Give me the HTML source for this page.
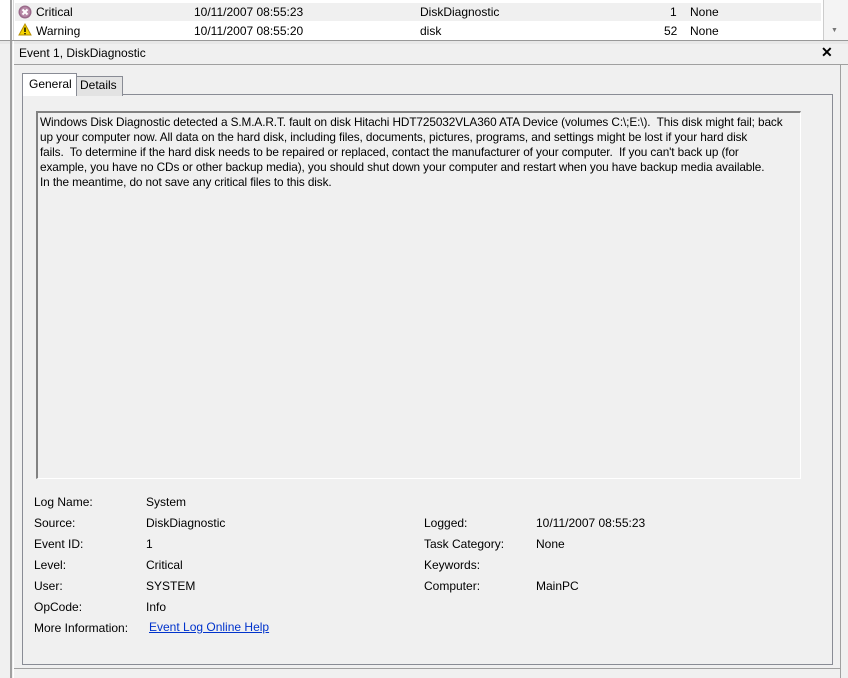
<!DOCTYPE html>
<html><head><style>
body{margin:0;width:848px;height:678px;background:#f0f0f0;font-family:"Liberation Sans",sans-serif;font-size:12px;color:#000;position:relative;overflow:hidden}
.a{position:absolute;white-space:nowrap}
</style></head><body>
<div class="a" style="left:0;top:0;width:848px;height:40px;background:#fff"></div>
<div class="a" style="left:15px;top:3px;width:806px;height:18px;background:#f0f0f0"></div>
<div class="a" style="left:10px;top:0;width:2px;height:40px;background:#a0a0a0"></div>
<div class="a" style="left:13px;top:0;width:1px;height:40px;background:#d8d8d8"></div>
<div class="a" style="left:823px;top:0;width:1px;height:40px;background:#ccc"></div>
<div class="a" style="left:824px;top:0;width:24px;height:40px;background:#f4f4f4"></div>
<div class="a" style="left:831px;top:27px;font-size:7px;color:#777">▼</div>
<svg class="a" style="left:18px;top:5px" width="14" height="14"><circle cx="7" cy="7" r="6.5" fill="#9a6a8a"/><circle cx="7" cy="7" r="5" fill="#b88aa8"/><path d="M4.5 4.5L9.5 9.5M9.5 4.5L4.5 9.5" stroke="#fff" stroke-width="2"/></svg>
<div class="a" style="left:36px;top:5px">Critical</div>
<div class="a" style="left:194px;top:5px">10/11/2007 08:55:23</div>
<div class="a" style="left:420px;top:5px">DiskDiagnostic</div>
<div class="a" style="left:670px;top:5px">1</div>
<div class="a" style="left:690px;top:5px">None</div>
<svg class="a" style="left:18px;top:23px" width="14" height="13"><path d="M7 1L13 12H1Z" fill="#f5d400" stroke="#b89000"/><rect x="6.3" y="4.5" width="1.4" height="4.5" fill="#000"/><rect x="6.3" y="10" width="1.4" height="1.3" fill="#000"/></svg>
<div class="a" style="left:36px;top:24px">Warning</div>
<div class="a" style="left:194px;top:24px">10/11/2007 08:55:20</div>
<div class="a" style="left:420px;top:24px">disk</div>
<div class="a" style="left:664px;top:24px">52</div>
<div class="a" style="left:690px;top:24px">None</div>
<div class="a" style="left:0;top:40px;width:848px;height:3px;background:#e8e8e8;border-top:1px solid #999"></div>
<div class="a" style="left:10px;top:41px;width:2px;height:637px;background:#a0a0a0"></div>
<div class="a" style="left:13px;top:41px;width:1px;height:637px;background:#fff"></div>
<div class="a" style="left:19px;top:46px">Event 1, DiskDiagnostic</div>
<div class="a" style="left:821px;top:44px;font-weight:bold;font-size:14px">✕</div>
<div class="a" style="left:14px;top:64px;width:834px;height:1px;background:#a0a0a0"></div>
<div class="a" style="left:840px;top:65px;width:1px;height:613px;background:#a0a0a0"></div>
<div class="a" style="left:14px;top:668px;width:826px;height:1px;background:#a0a0a0"></div>
<div class="a" style="left:22px;top:94px;width:809px;height:569px;border:1px solid #898c95;background:#f0f0f0"></div>
<div class="a" style="left:76px;top:76px;width:45px;height:19px;border:1px solid #898c95;border-bottom:none;background:#e3e3e3"></div>
<div class="a" style="left:80px;top:78px">Details</div>
<div class="a" style="left:22px;top:73px;width:53px;height:22px;border:1px solid #898c95;border-bottom:none;background:#fff"></div>
<div class="a" style="left:29px;top:77px">General</div>
<div class="a" style="left:36px;top:111px;width:762px;height:365px;border-top:2px solid #828282;border-left:2px solid #828282;border-right:1px solid #fff;border-bottom:1px solid #fff;background:#f0f0f0"></div>
<div class="a" style="left:40px;top:115px;line-height:15px;letter-spacing:-0.1px;font-size:11.8px">Windows Disk Diagnostic detected a S.M.A.R.T. fault on disk Hitachi HDT725032VLA360 ATA Device (volumes C:\;E:\).&nbsp; This disk might fail; back<br>up your computer now. All data on the hard disk, including files, documents, pictures, programs, and settings might be lost if your hard disk<br>fails.&nbsp; To determine if the hard disk needs to be repaired or replaced, contact the manufacturer of your computer.&nbsp; If you can't back up (for<br>example, you have no CDs or other backup media), you should shut down your computer and restart when you have backup media available.<br>In the meantime, do not save any critical files to this disk.</div>
<div class="a" style="left:34px;top:492px;line-height:21px">Log Name:<br>Source:<br>Event ID:<br>Level:<br>User:<br>OpCode:<br>More Information:</div>
<div class="a" style="left:146px;top:492px;line-height:21px">System<br>DiskDiagnostic<br>1<br>Critical<br>SYSTEM<br>Info</div>
<div class="a" style="left:149px;top:620px;color:#0033cc;text-decoration:underline">Event Log Online Help</div>
<div class="a" style="left:424px;top:513px;line-height:21px">Logged:<br>Task Category:<br>Keywords:<br>Computer:</div>
<div class="a" style="left:536px;top:513px;line-height:21px">10/11/2007 08:55:23<br>None<br><br>MainPC</div>
</body></html>
